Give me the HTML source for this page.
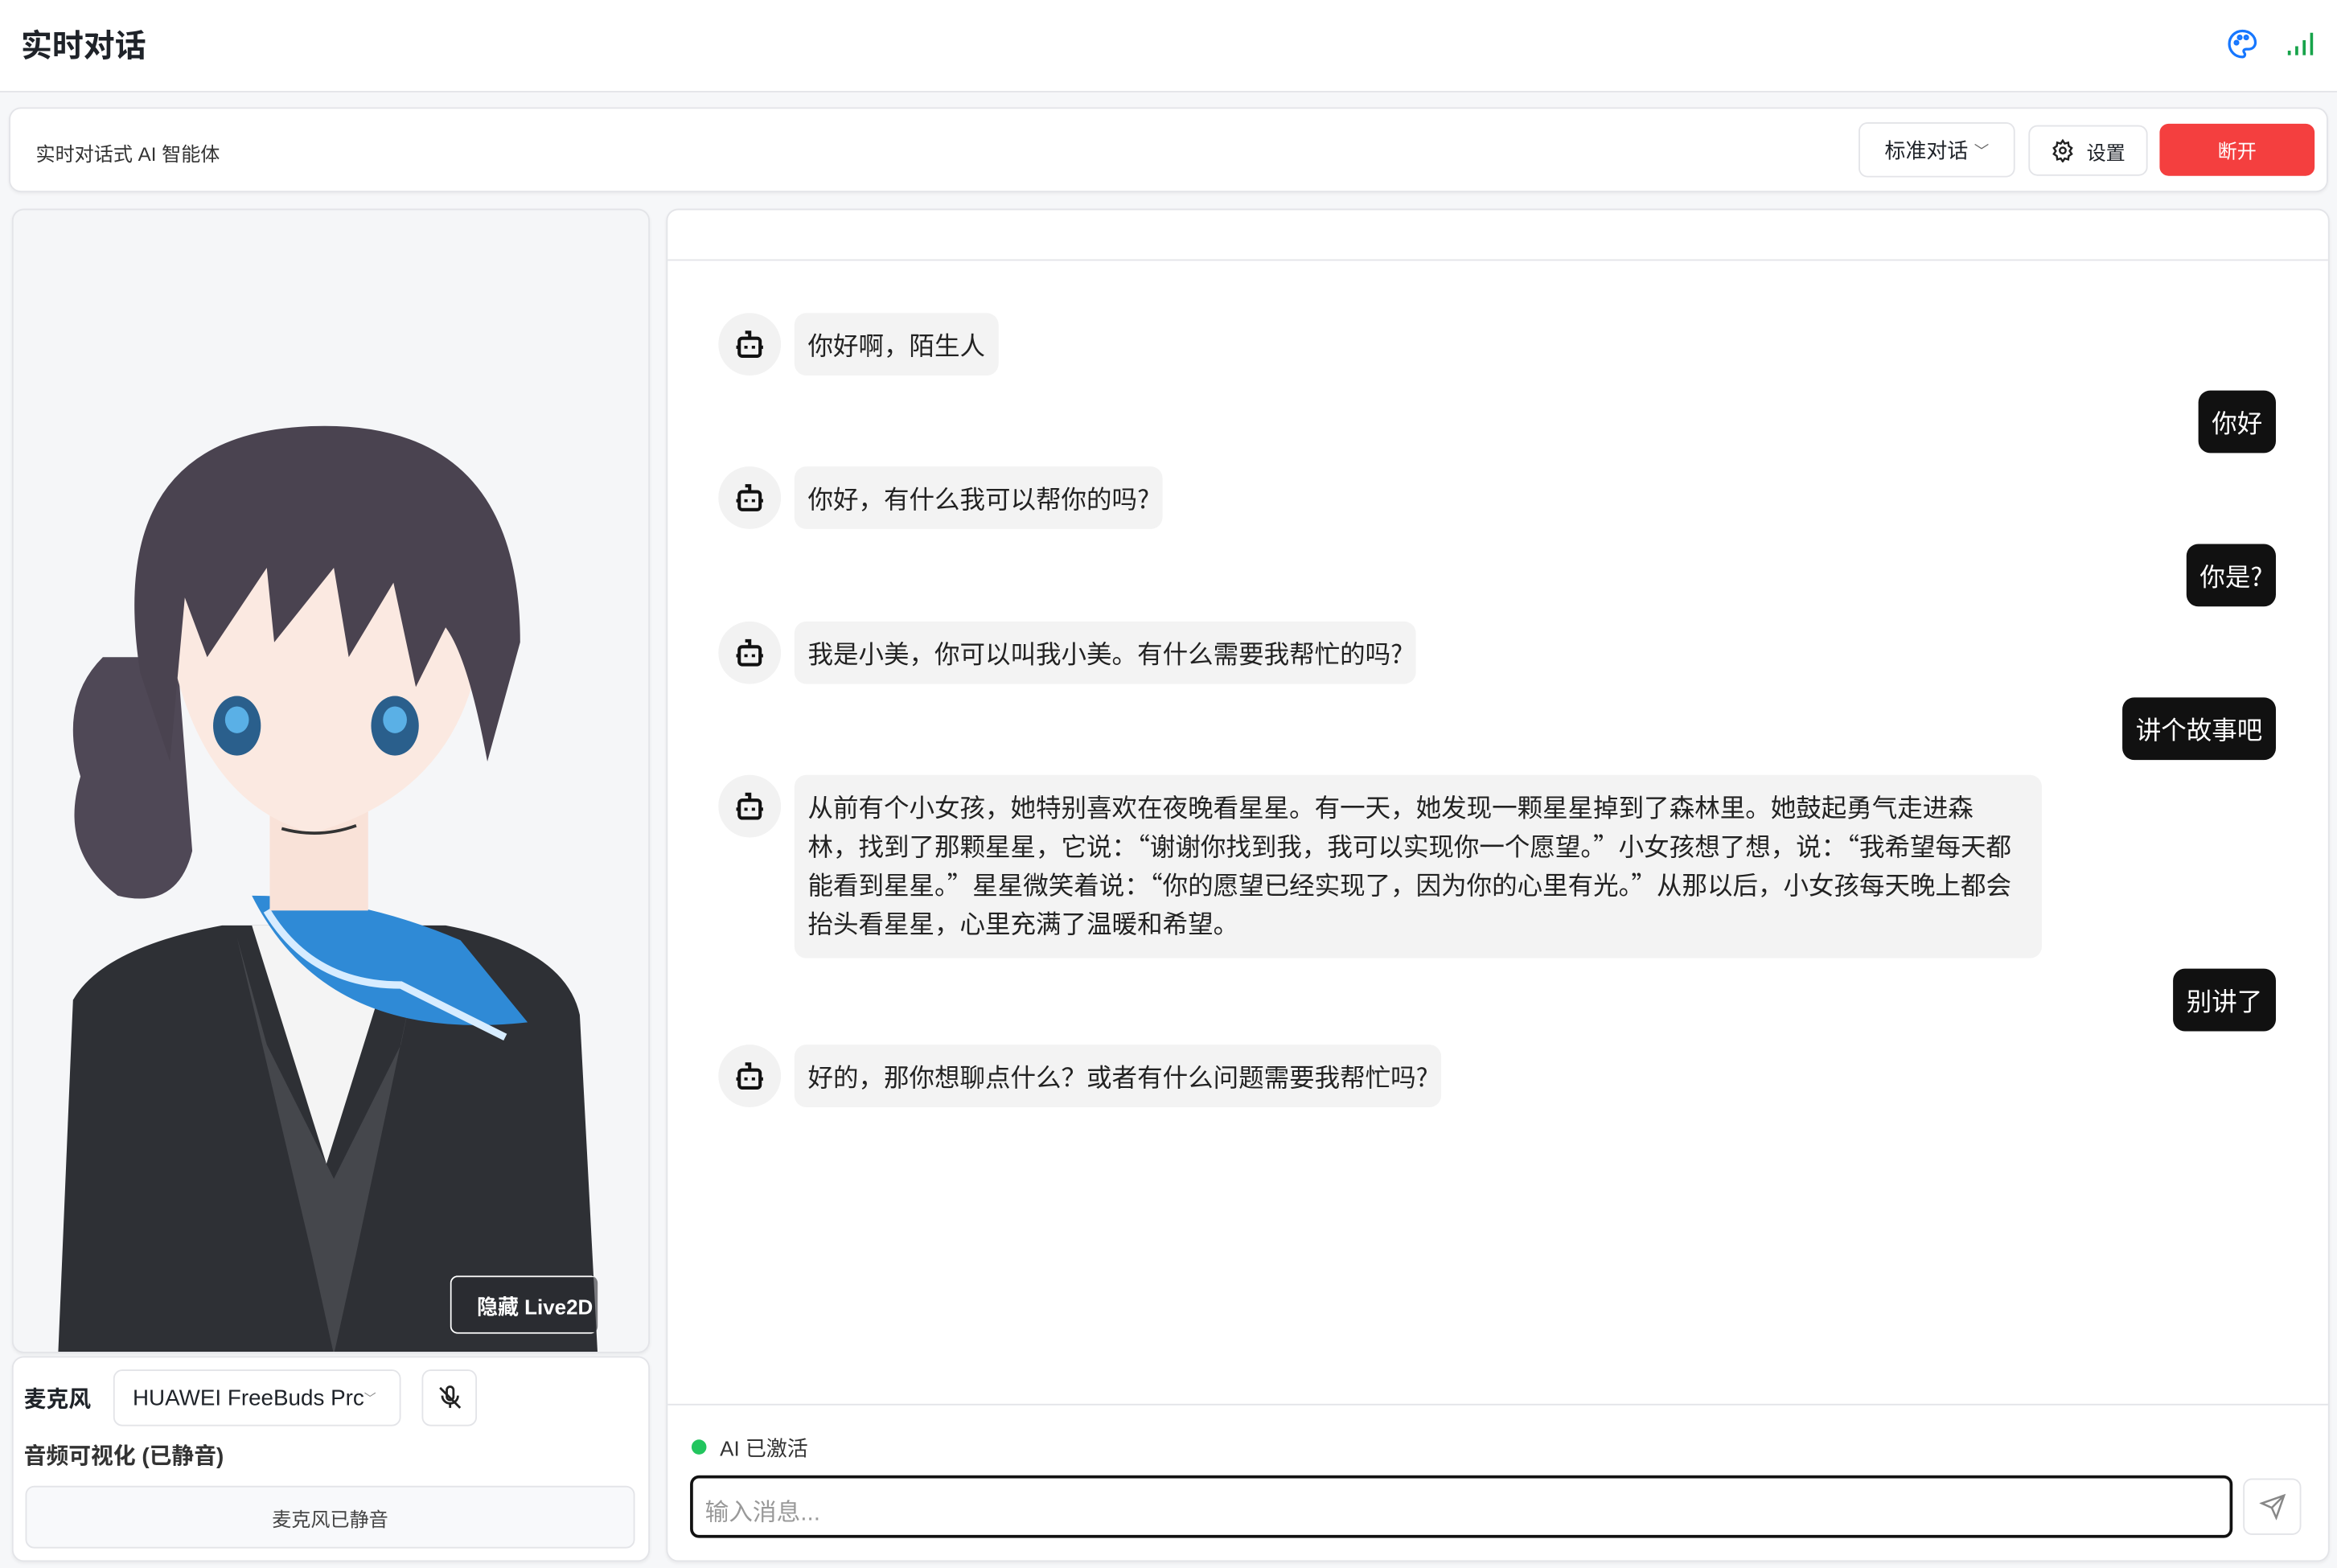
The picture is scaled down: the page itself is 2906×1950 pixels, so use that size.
<!DOCTYPE html>
<html><head><meta charset="utf-8"><style>
*{box-sizing:border-box;margin:0;padding:0}
html,body{width:2906px;height:1950px;overflow:hidden;background:#f6f7f9}
#r{width:1568px;height:1052px;transform:scale(1.8533);transform-origin:0 0;position:relative;font-family:"Liberation Sans","Noto Sans CJK SC",sans-serif;color:#1f2329}
.a{position:absolute}
.card{background:#fff;border:1px solid #e3e4e8;border-radius:8px;box-shadow:0 1px 2px rgba(0,0,0,.05)}
.bot{position:absolute;left:482px;width:42px;height:42px;border-radius:50%;background:#f2f2f2}
.bot svg{position:absolute;left:9px;top:9px}
.bb{position:absolute;left:533px;background:#f3f3f3;border-radius:8px;font-size:17px;line-height:26px;padding:8px 9px;color:#222;font-family:"Noto Sans CJK SC",sans-serif}
.ub{position:absolute;right:41px;background:#111;color:#fff;border-radius:8px;font-size:17px;line-height:26px;padding:8px 9px;font-family:"Noto Sans CJK SC",sans-serif}
.btn{position:absolute;border:1px solid #e3e4e8;border-radius:6px;background:#fff;font-size:14px;display:flex;align-items:center;justify-content:center}
</style></head><body><div id="r">
<div class="a" style="left:0;top:0;width:1568px;height:62px;background:#fff;border-bottom:1px solid #e3e4e8"></div>
<div class="a" style="left:14px;top:15px;font-size:21px;font-weight:bold">实时对话</div>
<svg class="a" style="left:1494px;top:19px" width="21" height="21" viewBox="0 0 24 24" fill="none" stroke="#1677ff" stroke-width="2"><path d="M12 2a10 10 0 1 0 0 20c1.5 0 2-1 2-2s-1-1.5-1-2.5 1-1.5 2-1.5h2a5 5 0 0 0 5-5c0-5-4.5-9-10-9z"/><circle cx="7.5" cy="11" r="1.2"/><circle cx="10" cy="7" r="1.2"/><circle cx="15" cy="7" r="1.2"/></svg>
<svg class="a" style="left:1534px;top:20px" width="18" height="18" viewBox="0 0 18 18" stroke="#17a34a" stroke-width="2"><path d="M2 17v-3M7 17v-6M12 17v-10M17 17V2"/></svg>
<div class="a card" style="left:6px;top:72px;width:1556px;height:57px"></div>
<div class="a" style="left:24px;top:93px;font-size:13px;color:#333">实时对话式 AI 智能体</div>
<div class="btn" style="left:1247px;top:82px;width:105px;height:37px">标准对话 <span style="font-size:10px;margin-left:4px;color:#666">﹀</span></div>
<div class="btn" style="left:1361px;top:84px;width:80px;height:34px;font-size:13px"><svg width="16" height="16" viewBox="0 0 24 24" fill="none" stroke="#222" stroke-width="2" style="margin-right:8px"><circle cx="12" cy="12" r="3"/><path d="M12 2l2 3 3.5-1 .5 3.5 3 2-2 3 2 3-3 2-.5 3.5-3.5-1-2 3-2-3-3.5 1-.5-3.5-3-2 2-3-2-3 3-2L6.5 4l3.5 1z"/></svg>设置</div>
<div class="btn" style="left:1449px;top:83px;width:104px;height:35px;background:#f43f3f;border-color:#f43f3f;color:#fff;font-size:13px">断开</div>

<div class="a card" style="left:8px;top:140px;width:428px;height:768px;background:#f5f6f8;overflow:hidden">
<svg width="428" height="768" viewBox="0 0 428 768">
<path d="M30 768 L40 530 Q60 495 140 480 L290 480 Q370 495 380 540 L392 768Z" fill="#2e3035"/>
<path d="M160 480 L210 640 L260 480Z" fill="#f4f4f4"/>
<path d="M150 488 L200 700 L215 768 L230 700 L275 488 L260 560 L215 650 L170 560Z" fill="#45474c"/>
<path d="M160 460 Q210 560 345 545 L300 490 Q230 460 160 460Z" fill="#2f8ad6"/>
<path d="M170 470 Q200 520 260 520 L330 555" stroke="#d7ecff" stroke-width="5" fill="none"/>
<rect x="172" y="400" width="66" height="70" fill="#f9e2d8"/>
<path d="M60 300 Q30 330 45 380 Q30 430 70 460 Q110 470 120 430 L110 300Z" fill="#4f4856"/>
<path d="M100 260 Q95 150 200 148 Q315 150 315 280 Q305 390 200 418 Q115 395 100 260Z" fill="#fbe9e1"/>
<path d="M85 310 Q60 150 200 145 Q340 140 340 290 L318 370 Q305 300 290 280 L270 320 L255 250 L225 300 L215 240 L175 290 L170 240 L130 300 L115 260 L105 370Z" fill="#4a4350"/>
<ellipse cx="150" cy="346" rx="16" ry="20" fill="#2a5f8c"/><ellipse cx="256" cy="346" rx="16" ry="20" fill="#2a5f8c"/>
<ellipse cx="150" cy="342" rx="8" ry="9" fill="#5ab0e6"/><ellipse cx="256" cy="342" rx="8" ry="9" fill="#5ab0e6"/>
<path d="M180 415 Q205 422 230 413" stroke="#333" stroke-width="2" fill="none"/>
</svg></div>
<div class="a" style="left:302px;top:856px;width:120px;height:39px;border:1px solid #fff;border-radius:5px;background:rgba(40,42,46,.6);color:#fff;font-size:14px;font-weight:bold;padding:10px 0 0 17px;overflow:hidden;white-space:nowrap;clip-path:inset(0 21px 0 0 round 5px)">隐藏 Live2D</div>

<div class="a card" style="left:8px;top:910px;width:428px;height:138px"></div>
<div class="a" style="left:16px;top:928px;font-size:15px;font-weight:bold">麦克风</div>
<div class="btn" style="left:76px;top:919px;width:193px;height:38px;justify-content:flex-start;padding-left:12px;font-size:15px;white-space:nowrap;overflow:hidden">HUAWEI FreeBuds Prc<span style="font-size:8px;color:#888">﹀</span></div>
<div class="btn" style="left:283px;top:919px;width:37px;height:38px"><svg width="18" height="18" viewBox="0 0 24 24" fill="none" stroke="#222" stroke-width="2"><rect x="9" y="2" width="6" height="12" rx="3"/><path d="M5 10a7 7 0 0 0 14 0M12 17v4M3 3l18 18"/></svg></div>
<div class="a" style="left:16px;top:966px;font-size:15px;font-weight:bold;color:#333">音频可视化 (已静音)</div>
<div class="btn" style="left:17px;top:997px;width:409px;height:42px;background:#f8f9fb;font-size:13px;color:#444">麦克风已静音</div>

<div class="a card" style="left:447px;top:140px;width:1116px;height:908px"></div>
<div class="a" style="left:448px;top:174px;width:1114px;height:1px;background:#e3e4e8"></div>
<div class="a" style="left:448px;top:942px;width:1114px;height:1px;background:#e3e4e8"></div>

<div class="bot" style="top:210px"><svg width="24" height="24" viewBox="0 0 24 24" fill="none" stroke="#111" stroke-width="2.2"><rect x="5" y="8" width="14" height="12" rx="2"/><path d="M12 8V4H9M3 14h2M19 14h2M9.5 13v2M14.5 13v2"/></svg></div>
<div class="bb" style="top:210px">你好啊，陌生人</div>
<div class="ub" style="top:262px">你好</div>
<div class="bot" style="top:313px"><svg width="24" height="24" viewBox="0 0 24 24" fill="none" stroke="#111" stroke-width="2.2"><rect x="5" y="8" width="14" height="12" rx="2"/><path d="M12 8V4H9M3 14h2M19 14h2M9.5 13v2M14.5 13v2"/></svg></div>
<div class="bb" style="top:313px">你好，有什么我可以帮你的吗?</div>
<div class="ub" style="top:365px">你是?</div>
<div class="bot" style="top:417px"><svg width="24" height="24" viewBox="0 0 24 24" fill="none" stroke="#111" stroke-width="2.2"><rect x="5" y="8" width="14" height="12" rx="2"/><path d="M12 8V4H9M3 14h2M19 14h2M9.5 13v2M14.5 13v2"/></svg></div>
<div class="bb" style="top:417px">我是小美，你可以叫我小美。有什么需要我帮忙的吗?</div>
<div class="ub" style="top:468px">讲个故事吧</div>
<div class="bot" style="top:520px"><svg width="24" height="24" viewBox="0 0 24 24" fill="none" stroke="#111" stroke-width="2.2"><rect x="5" y="8" width="14" height="12" rx="2"/><path d="M12 8V4H9M3 14h2M19 14h2M9.5 13v2M14.5 13v2"/></svg></div>
<div class="bb" style="top:520px;width:837px;padding-bottom:11px;white-space:nowrap">从前有个小女孩，她特别喜欢在夜晚看星星。有一天，她发现一颗星星掉到了森林里。她鼓起勇气走进森<br>林，找到了那颗星星，它说：“谢谢你找到我，我可以实现你一个愿望。”小女孩想了想，说：“我希望每天都<br>能看到星星。”星星微笑着说：“你的愿望已经实现了，因为你的心里有光。”从那以后，小女孩每天晚上都会<br>抬头看星星，心里充满了温暖和希望。</div>
<div class="ub" style="top:650px">别讲了</div>
<div class="bot" style="top:701px"><svg width="24" height="24" viewBox="0 0 24 24" fill="none" stroke="#111" stroke-width="2.2"><rect x="5" y="8" width="14" height="12" rx="2"/><path d="M12 8V4H9M3 14h2M19 14h2M9.5 13v2M14.5 13v2"/></svg></div>
<div class="bb" style="top:701px">好的，那你想聊点什么？或者有什么问题需要我帮忙吗?</div>

<div class="a" style="left:464px;top:966px;width:10px;height:10px;border-radius:50%;background:#22c55e"></div>
<div class="a" style="left:483px;top:962px;font-size:14px;color:#333">AI 已激活</div>
<div class="a" style="left:463px;top:990px;width:1035px;height:42px;border:2px solid #111;border-radius:6px;font-size:16px;color:#999;padding:9px 8px">输入消息...</div>
<div class="btn" style="left:1505px;top:992px;width:39px;height:38px"><svg width="18" height="18" viewBox="0 0 24 24" fill="none" stroke="#888" stroke-width="1.8"><path d="M22 2L11 13M22 2l-7 20-4-9-9-4z"/></svg></div>
</div></body></html>
